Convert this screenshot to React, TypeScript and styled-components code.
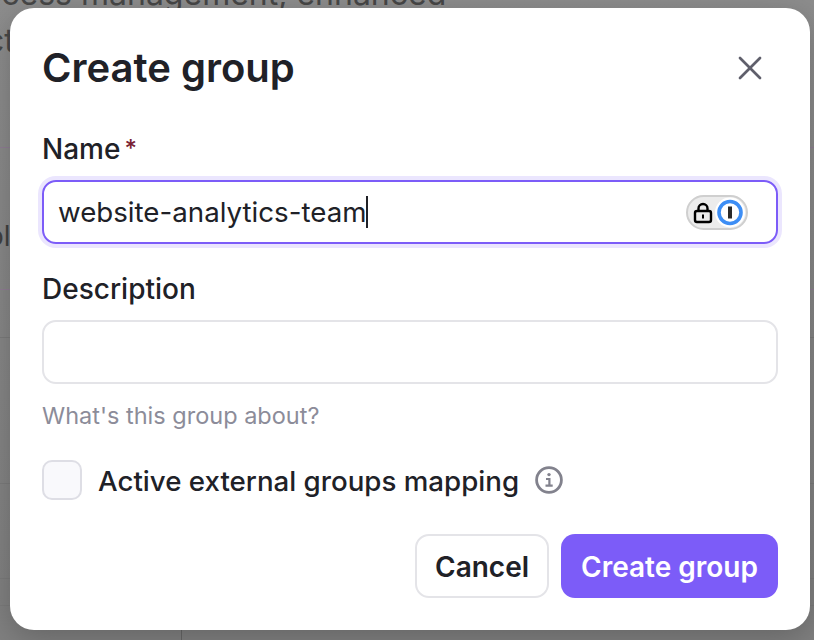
import React from 'react'
import styled, { createGlobalStyle } from 'styled-components'
import { X } from 'lucide-react'

const GlobalStyle = createGlobalStyle`
  html, body {
    margin: 0;
    padding: 0;
    background: #8c8c8c;
  }
  * {
    box-sizing: border-box;
  }
`

const Backdrop = styled.div`
  position: relative;
  width: 814px;
  height: 640px;
  overflow: hidden;
  background: linear-gradient(#8d8d8d, #808080);
  font-family: Inter, 'Liberation Sans', sans-serif;
`

const PageText = styled.div`
  margin-top: -30px;
  margin-left: -35px;
  color: #474747;
  font-size: 32px;
  line-height: 47px;
  white-space: nowrap;
`

const PageTextTail = styled.div`
  margin-left: -14px;
  color: #474747;
  font-size: 32px;
  line-height: 47px;
  white-space: nowrap;
`

const Rows = styled.div`
  margin-top: 83px;
`

const Row = styled.div<{ $height: number; $accent?: boolean }>`
  height: ${p => p.$height}px;
  border-top: 1px solid ${p => (p.$accent ? '#8f7d93' : '#7b7b7b')};
`

const RowLabel = styled.div`
  margin: 76px 0 0 -13px;
  color: #404040;
  font-size: 28px;
  line-height: 24px;
`

const ColumnCell = styled.div`
  width: 182px;
  height: 100%;
  border-right: 1px solid #666;
`

const Modal = styled.div`
  position: absolute;
  left: 10px;
  top: 8px;
  width: 800px;
  height: 622px;
  padding: 32px;
  display: flex;
  flex-direction: column;
  background: #fff;
  border-radius: 24px;
  box-shadow: 0 8px 32px rgba(0, 0, 0, 0.22);
  color: #202127;
`

const Header = styled.div`
  display: flex;
  align-items: center;
  justify-content: space-between;
  height: 56px;
  margin-bottom: 34px;
`

const Title = styled.h1`
  margin: 0;
  font-size: 40px;
  line-height: 56px;
  font-weight: 600;
`

const CloseButton = styled.button`
  display: flex;
  padding: 0;
  margin-right: 8px;
  border: none;
  background: none;
  color: #5f5f6b;
`

const Label = styled.label`
  display: flex;
  font-size: 28px;
  line-height: 38px;
  font-weight: 500;
  margin-bottom: 12px;
`

const Required = styled.span`
  color: #7a1f33;
  margin-left: 4px;
  font-size: 24px;
`

const InputBox = styled.div<{ $focused?: boolean }>`
  display: flex;
  align-items: center;
  justify-content: space-between;
  height: 64px;
  padding: 0 28px 0 14px;
  border-radius: 14px;
  border: 2px solid ${p => (p.$focused ? '#7c5cf8' : '#e4e4e8')};
  box-shadow: ${p => (p.$focused ? '0 0 0 4px #ebe6fe' : 'none')};
  font-size: 27.7px;
  margin-bottom: ${p => (p.$focused ? '26px' : '12px')};
`

const InputValue = styled.span`
  display: flex;
  align-items: center;
  white-space: nowrap;
`

const Caret = styled.span`
  width: 2px;
  height: 32px;
  background: #202127;
`

const Hint = styled.p`
  margin: 0 0 24px;
  font-size: 23.5px;
  line-height: 40px;
  color: #8c8c99;
`

const CheckRow = styled.div`
  display: flex;
  align-items: center;
  height: 40px;
  font-size: 27.7px;
  font-weight: 500;
`

const CheckText = styled.span`
  margin-top: 2px;
`

const CheckBox = styled.span`
  width: 40px;
  height: 40px;
  margin-right: 16px;
  border: 2px solid #dedee5;
  border-radius: 10px;
  background: #f9f9fc;
`

const InfoMark = styled.svg`
  margin-left: 16px;
  color: #82828d;
`

const Footer = styled.div`
  display: flex;
  justify-content: flex-end;
  gap: 12px;
  margin-top: auto;
`

const Button = styled.button<{ $primary?: boolean }>`
  height: 64px;
  padding: 2px ${p => (p.$primary ? '20px' : '18px')} 0;
  border-radius: 14px;
  border: ${p => (p.$primary ? 'none' : '2px solid #e4e4e8')};
  background: ${p => (p.$primary ? '#7c5cf8' : '#fff')};
  color: ${p => (p.$primary ? '#fff' : '#202127')};
  font-family: inherit;
  font-size: 28px;
  font-weight: 600;
`

const PasswordBadge = () => (
  <svg width="62" height="35" viewBox="0 0 62 35">
    <rect x="1" y="1" width="60" height="33" rx="16.5" fill="#ececec" stroke="#cfcfcf" strokeWidth="2" />
    <rect x="9" y="16" width="16" height="11" rx="2" fill="none" stroke="#000" strokeWidth="2.4" />
    <path d="M12.5 16v-2.5a4.5 4.5 0 0 1 9 0V16" fill="none" stroke="#000" strokeWidth="2.4" />
    <rect x="16" y="19.5" width="2" height="4" fill="#000" />
    <circle cx="44" cy="17.5" r="15" fill="#fff" />
    <circle cx="44" cy="17.5" r="11" fill="none" stroke="#3d8ef5" strokeWidth="3.6" />
    <rect x="42" y="11.5" width="4" height="12" fill="#2a2a2a" />
  </svg>
)

const InfoGlyph = () => (
  <InfoMark width="28" height="28" viewBox="0 0 28 28" fill="none" stroke="currentColor" strokeWidth="2.8">
    <circle cx="14" cy="14" r="12.4" />
    <path d="M11 13h3.4v6M10.5 19.6h7.2" strokeWidth="2.2" />
    <circle cx="14" cy="8.6" r="1.7" fill="currentColor" stroke="none" />
  </InfoMark>
)

const App: React.FC = () => {
  return (
    <Backdrop>
      <GlobalStyle />
      <PageText>access management, enhanced</PageText>
      <PageTextTail>ct</PageTextTail>
      <Rows>
        <Row $height={142} $accent>
          <RowLabel>ol</RowLabel>
        </Row>
        <Row $height={48} $accent />
        <Row $height={146} />
        <Row $height={95} />
        <Row $height={27} />
        <Row $height={35}>
          <ColumnCell />
        </Row>
      </Rows>
      <Modal>
        <Header>
          <Title>Create group</Title>
          <CloseButton>
            <X size={40} strokeWidth={1.6} />
          </CloseButton>
        </Header>
        <Label>
          Name<Required>*</Required>
        </Label>
        <InputBox $focused>
          <InputValue>
            website-analytics-team
            <Caret />
          </InputValue>
          <PasswordBadge />
        </InputBox>
        <Label>Description</Label>
        <InputBox />
        <Hint>What's this group about?</Hint>
        <CheckRow>
          <CheckBox />
          <CheckText>Active external groups mapping</CheckText>
          <InfoGlyph />
        </CheckRow>
        <Footer>
          <Button>Cancel</Button>
          <Button $primary>Create group</Button>
        </Footer>
      </Modal>
    </Backdrop>
  )
}

export default App
